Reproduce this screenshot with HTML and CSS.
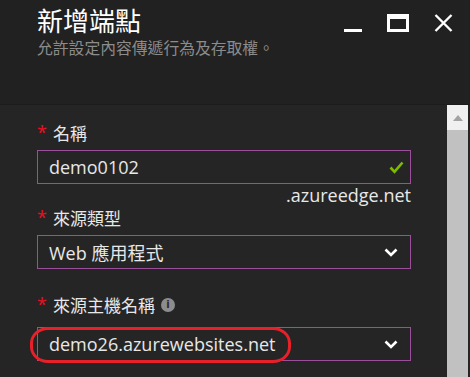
FILE: index.html
```html
<!DOCTYPE html>
<html lang="zh-Hant">
<head>
  <meta charset="UTF-8">
  <meta name="viewport" content="width=device-width, initial-scale=1.0">
  <title>新增端點</title>
  <link rel="stylesheet" href="styles.css">
</head>
<body>
  <div class="blade">
    <header class="blade-header">
      <div class="titles">
        <h1>新增端點</h1>
        <p class="subtitle">允許設定內容傳遞行為及存取權。</p>
      </div>
      <div class="controls">
        <span class="ctl ctl-min"></span>
        <span class="ctl ctl-max"></span>
        <svg class="ctl ctl-close" width="19" height="18" viewBox="0 0 19 18">
          <path d="M1.5 1 L17.5 17 M17.5 1 L1.5 17" stroke="#fff" stroke-width="2.4" fill="none"/>
        </svg>
      </div>
    </header>

    <div class="blade-body">
      <form class="form">
        <label class="field-label"><span class="req">*</span>名稱</label>
        <div class="input">
          <span class="value">demo0102</span>
          <svg class="check" width="15" height="13" viewBox="0 0 15 13">
            <path d="M1.5 6.5 L5.5 10.8 L13.5 1.5" stroke="#7fba00" stroke-width="2.6" fill="none"/>
          </svg>
        </div>
        <div class="suffix">.azureedge.net</div>

        <label class="field-label"><span class="req">*</span>來源類型</label>
        <div class="input select">
          <span class="value">Web 應用程式</span>
          <svg class="chevron" width="14" height="9" viewBox="0 0 14 9">
            <path d="M1.5 1.5 L7 7 L12.5 1.5" stroke="#fff" stroke-width="2.6" fill="none"/>
          </svg>
        </div>

        <label class="field-label label-gap"><span class="req">*</span>來源主機名稱<span class="info">i</span></label>
        <div class="input select marked">
          <span class="value">demo26.azurewebsites.net</span>
          <svg class="chevron" width="14" height="9" viewBox="0 0 14 9">
            <path d="M1.5 1.5 L7 7 L12.5 1.5" stroke="#fff" stroke-width="2.6" fill="none"/>
          </svg>
          <span class="annotation"></span>
        </div>
      </form>

      <div class="scrollbar">
        <div class="scroll-up"><span class="arrow"></span></div>
        <div class="scroll-thumb"></div>
      </div>
    </div>
  </div>
</body>
</html>
```

FILE: styles.css
```css
html, body {
  margin: 0;
  padding: 0;
  height: 100%;
}

body {
  background: #252525;
  color: #e8e8e8;
  font-family: 'Open Sans', 'Noto Sans CJK TC', sans-serif;
  overflow: hidden;
}

.blade {
  display: flex;
  flex-direction: column;
  height: 377px;
}

.blade-header {
  background: #212121;
  height: 104px;
  border-bottom: 1px solid #1c1c1c;
  display: flex;
  justify-content: space-between;
  padding-left: 37px;
}

h1 {
  font-family: 'Noto Sans CJK TC', sans-serif;
  font-weight: 400;
  font-size: 26px;
  line-height: 30px;
  color: #fff;
  margin: 5px 0 0;
}

.subtitle {
  font-family: 'Noto Sans CJK TC', sans-serif;
  font-size: 15.8px;
  line-height: 20px;
  color: #8c8c8c;
  margin: 3px 0 0;
}

.controls {
  display: flex;
  align-items: flex-start;
  padding-top: 14px;
  padding-right: 17px;
}

.ctl {
  display: block;
}

.ctl-min {
  width: 18px;
  height: 3px;
  background: #fff;
  margin-top: 15px;
}

.ctl-max {
  width: 16px;
  height: 10px;
  border: 3px solid #fff;
  border-top-width: 5px;
  margin-left: 25px;
}

.ctl-close {
  margin-left: 25px;
}

.blade-body {
  flex: 1;
  display: flex;
}

.form {
  width: 374px;
  padding: 16px 36px 0 37px;
  display: flex;
  flex-direction: column;
}

.field-label {
  font-family: 'Noto Sans CJK TC', sans-serif;
  font-size: 17px;
  line-height: 24px;
  color: #e8e8e8;
  display: flex;
  align-items: center;
  margin-bottom: 5px;
}

.req {
  color: #e81123;
  font-family: 'Open Sans', sans-serif;
  font-size: 18px;
  width: 16px;
  margin-top: -2px;
}

.label-gap {
  margin-top: 24px;
  margin-bottom: 10px;
}

.info {
  display: inline-flex;
  align-items: center;
  justify-content: center;
  width: 14px;
  height: 14px;
  border-radius: 50%;
  background: #8d8d8d;
  color: #2a2a2a;
  font-family: 'DejaVu Sans', sans-serif;
  font-size: 10px;
  font-weight: bold;
  margin-left: 6px;
}

.input {
  position: relative;
  height: 32px;
  border: 1px solid #9b4f9b;
  display: flex;
  align-items: center;
  justify-content: space-between;
  padding: 0 6px 0 11px;
}

.value {
  font-family: 'Open Sans', 'Noto Sans CJK TC', sans-serif;
  font-size: 18px;
  color: #e8e8e8;
}

.select {
  padding-right: 12px;
}

.suffix {
  text-align: right;
  font-size: 18px;
  line-height: 22px;
  color: #e8e8e8;
  margin-top: 0;
}

.annotation {
  position: absolute;
  left: -8px;
  top: -1px;
  width: 255px;
  height: 30px;
  border: 3px solid #e8202a;
  border-radius: 18px / 16px;
}

.scrollbar {
  width: 21px;
  margin-right: 2px;
  display: flex;
  flex-direction: column;
  background: #c1c1c1;
}

.scroll-up {
  height: 25px;
  background: #f0f0f0;
  display: flex;
  justify-content: center;
  padding-top: 10px;
  box-sizing: border-box;
}

.arrow {
  width: 0;
  height: 0;
  border-left: 5px solid transparent;
  border-right: 5px solid transparent;
  border-bottom: 6px solid #a3a3a3;
}

.scroll-thumb {
  flex: 1;
}
```
